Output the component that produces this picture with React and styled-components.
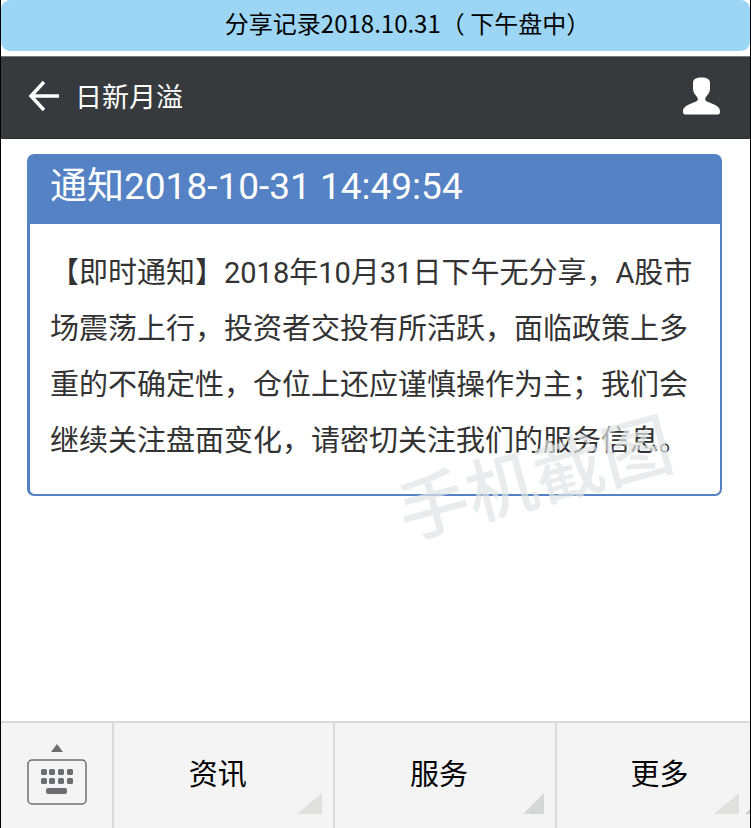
import React from "react";
import styled, { createGlobalStyle } from "styled-components";

const GlobalStyle = createGlobalStyle`
  * { box-sizing: border-box; }
  body { margin: 0; background: #ffffff; }
`;

const Screen = styled.div`
  display: flex;
  flex-direction: column;
  min-height: 100vh;
  overflow: hidden;
  border: 0 solid #000000;
  border-width: 0 1px;
  background: #ffffff;
  font-family: Roboto, "Noto Sans CJK SC", sans-serif;
`;

const Banner = styled.h1`
  margin: 0 0 5px;
  padding: 0 0 5px 64px;
  border-radius: 9px;
  background: #9dd6f4;
  color: #000000;
  font: 400 24px/46px "Noto Sans CJK SC", sans-serif;
  text-align: center;
`;

const NavBar = styled.header`
  display: flex;
  align-items: center;
  height: 83px;
  padding: 0 30px 4px 26px;
  border-top: 1px solid #74797b;
  border-bottom: 1px solid #2b2f32;
  background: #363a3d;
  color: #ffffff;
`;

const IconButton = styled.button`
  display: flex;
  padding: 0;
  border: 0;
  background: none;
  color: inherit;
  cursor: pointer;
`;

const NavTitle = styled.h2`
  flex: 1;
  margin: 0 0 0 15px;
  font: 400 27px/40px "Noto Sans CJK SC", sans-serif;
`;

const Notice = styled.article`
  position: relative;
  margin: 15px 28px 0 26px;
  border: 2px solid #5482c4;
  border-left-width: 3px;
  border-radius: 7px;
`;

const NoticeTitle = styled.h3`
  margin: 0;
  padding: 0 20px 6px;
  background: #5482c4;
  color: #ffffff;
  font-weight: 400;
  font-size: 37px;
  line-height: 62px;
`;

const NoticeText = styled.p`
  margin: 0;
  padding: 21px 20px 25px;
  color: #333333;
  font-size: 29px;
  line-height: 56px;
`;

const Watermark = styled.span`
  position: absolute;
  right: 46px;
  bottom: -15px;
  color: #e1e5e4;
  opacity: 0.7;
  font: 500 70px/70px "Noto Sans CJK SC", sans-serif;
  white-space: nowrap;
  transform: rotate(-15deg);
  pointer-events: none;
`;

const MenuBar = styled.nav`
  display: flex;
  height: 107px;
  margin-top: auto;
  border-top: 2px solid #d9d9d9;
  background: #f4f4f4;
`;

const KeyboardButton = styled(IconButton)`
  width: 111px;
  flex: none;
  justify-content: center;
  align-items: center;
  padding-bottom: 3px;
  color: #6b6e6f;
`;

const MenuButton = styled.button`
  position: relative;
  flex: ${(p) => p.$grow} 1 0;
  padding: 0 ${(p) => (p.$last ? 0 : 12)}px 8px ${(p) => (p.$last ? 12 : 0)}px;
  border: 0;
  border-left: 2px solid #d9d9d9;
  background: none;
  color: #000000;
  font: 400 29px/40px "Noto Sans CJK SC", sans-serif;
  cursor: pointer;
`;

const Corner = styled.svg`
  position: absolute;
  right: 11px;
  bottom: 14px;
  fill: ${(p) => p.$tone};
`;

const EdgeCorner = styled(Corner)`
  right: 0;
`;

const menu = [
  { label: "资讯", grow: 222, tone: "#e0e0df", corner: 25 },
  { label: "服务", grow: 222, tone: "#d5d7d6", corner: 21 },
  { label: "更多", grow: 194, tone: "#e0e0df", corner: 25, last: true },
];

const keyRows = [26, 35];
const keyColumns = [14, 22, 31, 40];

export default function App() {
  return (
    <Screen>
      <GlobalStyle />
      <Banner>分享记录2018.10.31（ 下午盘中）</Banner>
      <NavBar>
        <IconButton type="button" aria-label="返回">
          <svg width="33" height="32" viewBox="0 0 33 32" fill="none" stroke="currentColor" strokeWidth="3.500">
            <path d="M32 16H4M17 2L4 16L17 30" />
          </svg>
        </IconButton>
        <NavTitle>日新月溢</NavTitle>
        <IconButton type="button" aria-label="个人资料">
          <svg width="37" height="38" viewBox="0 0 37 38" fill="currentColor">
            <path d="M18.500 0.500C24 0.500 27 2 27 6V11C27 16 25 17 23 20C21.500 22 22 23.500 24 24.500L30 27C34.500 29 37 31 37 34C37 36.500 36.500 37.500 35 37.500H2C0.500 37.500 0 36.500 0 34C0 31 2.500 29 7 27L13 24.500C15 23.500 15.500 22 14 20C12 17 10 16 10 11V6C10 2 13 0.500 18.500 0.500Z" />
          </svg>
        </IconButton>
      </NavBar>
      <main>
        <Notice>
          <NoticeTitle>通知2018-10-31 14:49:54</NoticeTitle>
          <NoticeText>
            【即时通知】2018年10月31日下午无分享，A股市场震荡上行，投资者交投有所活跃，面临政策上多重的不确定性，仓位上还应谨慎操作为主；我们会继续关注盘面变化，请密切关注我们的服务信息。
          </NoticeText>
          <Watermark>手机截图</Watermark>
        </Notice>
      </main>
      <MenuBar>
        <KeyboardButton type="button" aria-label="键盘">
          <svg width="60" height="62" viewBox="0 0 60 62" fill="currentColor">
            <path d="M30 1L36 9H24Z" />
            <rect x="1" y="17" width="58" height="44" rx="4" fill="none" stroke="currentColor" strokeWidth="1.500" />
            {keyRows.map((y) =>
              keyColumns.map((x) => (
                <rect key={`${x}-${y}`} x={x} y={y} width="6" height="6" rx="1.500" />
              ))
            )}
            <rect x="19" y="45" width="21" height="6" rx="2" />
          </svg>
        </KeyboardButton>
        {menu.map((item) => (
          <MenuButton key={item.label} type="button" $grow={item.grow} $last={item.last}>
            {item.label}
            <Corner
              $tone={item.tone}
              width={item.corner}
              height="21"
              viewBox={`0 0 ${item.corner} 21`}
              aria-hidden="true"
            >
              <path d={`M${item.corner} 0V21H0Z`} />
            </Corner>
            {item.last && (
              <EdgeCorner $tone="#c9cbca" width="5" height="5" viewBox="0 0 5 5" aria-hidden="true">
                <path d="M5 0V5H0Z" />
              </EdgeCorner>
            )}
          </MenuButton>
        ))}
      </MenuBar>
    </Screen>
  );
}
